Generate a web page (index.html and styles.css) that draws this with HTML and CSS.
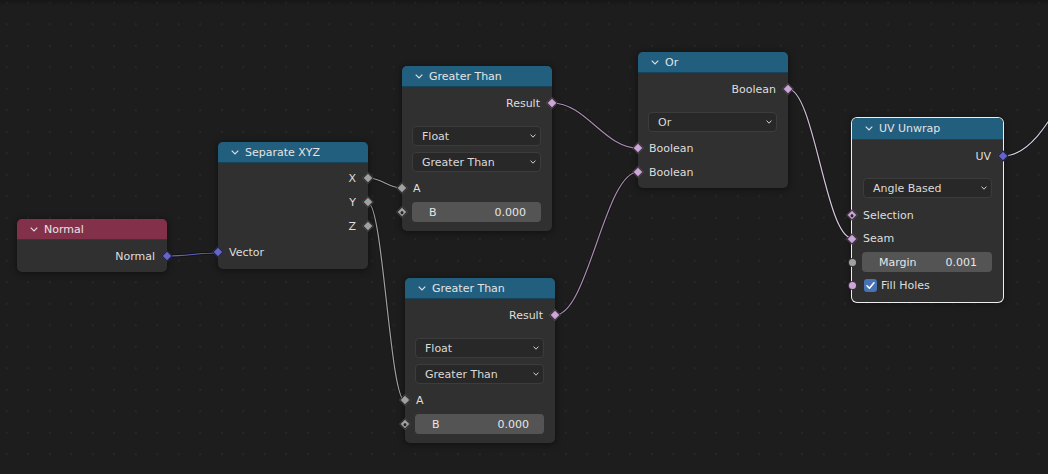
FILE: index.html
```html
<!DOCTYPE html>
<html>
<head>
<meta charset="utf-8">
<link rel="stylesheet" href="styles.css">
</head>
<body>
<div class="canvas">
  <svg class="links" width="1048" height="474" viewBox="0 0 1048 474">
    <defs>
      <linearGradient id="hl6" x1="0" y1="0" x2="1" y2="1">
        <stop offset="0" stop-color="#c8acd0"/>
        <stop offset="1" stop-color="#dcd0e0"/>
      </linearGradient>
      <linearGradient id="hl7" x1="0" y1="1" x2="1" y2="0">
        <stop offset="0" stop-color="#dcdce8"/>
        <stop offset="1" stop-color="#9898d0"/>
      </linearGradient>
    </defs>
    <g class="shadow">
      <path d="M167 256 C187 256 198 253 218 253"/>
      <path d="M368 178 C382 178 388 188 402 188"/>
      <path d="M368 203 C383 203 390 401 405 401"/>
      <path d="M552 103 C586 103 604 148 638 148"/>
      <path d="M555 315 C588 315 605 172 638 172"/>
      <path d="M788 89 C814 89 826 238 852 238"/>
      <path d="M1003 156 C1054 156 1079 30 1130 30"/>
    </g>
    <path class="ln ln-vec" d="M167 256 C187 256 198 253 218 253"/>
    <path class="ln ln-flt" d="M368 178 C382 178 388 188 402 188"/>
    <path class="ln ln-flt" d="M368 203 C383 203 390 401 405 401"/>
    <path class="ln ln-bool" d="M552 103 C586 103 604 148 638 148"/>
    <path class="ln ln-bool" d="M555 315 C588 315 605 172 638 172"/>
    <path class="ln ln-hl6" d="M788 89 C814 89 826 238 852 238"/>
    <path class="ln ln-hl7" d="M1003 156 C1054 156 1079 30 1130 30"/>
  </svg>

  <!-- Normal -->
  <div class="node pos-normal">
    <div class="hdr hdr-input">
      <svg class="chev" width="8" height="5" viewBox="0 0 8 5"><polyline points="0.7,0.7 4,4 7.3,0.7"/></svg>
      <span class="title">Normal</span>
    </div>
    <div class="body pad-n">
      <div class="row out"><span>Normal</span><i class="sock vec"></i></div>
    </div>
  </div>

  <!-- Separate XYZ -->
  <div class="node pos-sep">
    <div class="hdr hdr-conv">
      <svg class="chev" width="8" height="5" viewBox="0 0 8 5"><polyline points="0.7,0.7 4,4 7.3,0.7"/></svg>
      <span class="title">Separate XYZ</span>
    </div>
    <div class="body pad-sep">
      <div class="row out"><span>X</span><i class="sock flt"></i></div>
      <div class="row out"><span>Y</span><i class="sock flt"></i></div>
      <div class="row out"><span>Z</span><i class="sock flt"></i></div>
      <div class="row in mt2"><i class="sock vec"></i><span>Vector</span></div>
    </div>
  </div>

  <!-- Greater Than (top) -->
  <div class="node pos-gt1">
    <div class="hdr hdr-conv">
      <svg class="chev" width="8" height="5" viewBox="0 0 8 5"><polyline points="0.7,0.7 4,4 7.3,0.7"/></svg>
      <span class="title">Greater Than</span>
    </div>
    <div class="body pad-gt">
      <div class="row out"><span>Result</span><i class="sock bool"></i></div>
      <div class="drop mt11"><span>Float</span><svg class="dchev" width="6" height="4" viewBox="0 0 6 4"><polyline points="0.6,0.6 3,3.2 5.4,0.6"/></svg></div>
      <div class="drop mt6"><span>Greater Than</span><svg class="dchev" width="6" height="4" viewBox="0 0 6 4"><polyline points="0.6,0.6 3,3.2 5.4,0.6"/></svg></div>
      <div class="row in mt4"><i class="sock flt"></i><span>A</span></div>
      <div class="row in"><i class="sock flt dot"></i><div class="field"><span>B</span><span>0.000</span></div></div>
    </div>
  </div>

  <!-- Greater Than (bottom) -->
  <div class="node pos-gt2">
    <div class="hdr hdr-conv">
      <svg class="chev" width="8" height="5" viewBox="0 0 8 5"><polyline points="0.7,0.7 4,4 7.3,0.7"/></svg>
      <span class="title">Greater Than</span>
    </div>
    <div class="body pad-gt">
      <div class="row out"><span>Result</span><i class="sock bool"></i></div>
      <div class="drop mt11"><span>Float</span><svg class="dchev" width="6" height="4" viewBox="0 0 6 4"><polyline points="0.6,0.6 3,3.2 5.4,0.6"/></svg></div>
      <div class="drop mt6"><span>Greater Than</span><svg class="dchev" width="6" height="4" viewBox="0 0 6 4"><polyline points="0.6,0.6 3,3.2 5.4,0.6"/></svg></div>
      <div class="row in mt4"><i class="sock flt"></i><span>A</span></div>
      <div class="row in"><i class="sock flt dot"></i><div class="field"><span>B</span><span>0.000</span></div></div>
    </div>
  </div>

  <!-- Or -->
  <div class="node pos-or">
    <div class="hdr hdr-conv">
      <svg class="chev" width="8" height="5" viewBox="0 0 8 5"><polyline points="0.7,0.7 4,4 7.3,0.7"/></svg>
      <span class="title">Or</span>
    </div>
    <div class="body pad-or">
      <div class="row out"><span>Boolean</span><i class="sock bool"></i></div>
      <div class="drop mt11"><span>Or</span><svg class="dchev" width="6" height="4" viewBox="0 0 6 4"><polyline points="0.6,0.6 3,3.2 5.4,0.6"/></svg></div>
      <div class="row in mt4"><i class="sock bool"></i><span>Boolean</span></div>
      <div class="row in"><i class="sock bool"></i><span>Boolean</span></div>
    </div>
  </div>

  <!-- UV Unwrap -->
  <div class="node pos-uv selected">
    <div class="hdr hdr-geo">
      <svg class="chev" width="8" height="5" viewBox="0 0 8 5"><polyline points="0.7,0.7 4,4 7.3,0.7"/></svg>
      <span class="title">UV Unwrap</span>
    </div>
    <div class="body pad-uv">
      <div class="row out"><span>UV</span><i class="sock vec"></i></div>
      <div class="drop mt10"><span>Angle Based</span><svg class="dchev" width="6" height="4" viewBox="0 0 6 4"><polyline points="0.6,0.6 3,3.2 5.4,0.6"/></svg></div>
      <div class="row in mt5"><i class="sock bool dot"></i><span>Selection</span></div>
      <div class="row in h23"><i class="sock bool"></i><span>Seam</span></div>
      <div class="row in"><i class="sock circ flt-c"></i><div class="field"><span class="flabel">Margin</span><span>0.001</span></div></div>
      <div class="row in h22"><i class="sock circ bool-c"></i>
        <span class="check"><svg width="13" height="13" viewBox="0 0 13 13"><polyline points="3,6.8 5.4,9.2 10,3.8"/></svg></span>
        <span class="clabel">Fill Holes</span>
      </div>
    </div>
  </div>
</div>
</body>
</html>
```

FILE: styles.css
```css
* { box-sizing: border-box; }
html, body { margin: 0; padding: 0; background: #1d1d1d; }

.canvas {
  position: relative;
  width: 1048px;
  height: 474px;
  overflow: hidden;
  font-family: "DejaVu Sans", "Liberation Sans", sans-serif;
  font-size: 11px;
  color: #dedede;
  background:
    linear-gradient(to bottom, rgba(0,0,0,0.22), rgba(0,0,0,0) 6px),
    radial-gradient(circle, #282828 0.9px, rgba(40,40,40,0) 1.3px) -4px -8px / 21.5px 21.5px,
    #1d1d1d;
}

.links { position: absolute; left: 0; top: 0; }
.links path { fill: none; }
.links .shadow path { stroke: rgba(0,0,0,0.35); stroke-width: 2.8; }
.ln { stroke-width: 1.2; }
.ln-vec { stroke: #6464c0; }
.ln-flt { stroke: #a0a0a0; }
.ln-bool { stroke: #a98bb3; }
.ln-hl6 { stroke: url(#hl6); }
.ln-hl7 { stroke: url(#hl7); }

/* nodes */
.node {
  position: absolute;
  width: 150px;
  background: #303030;
  border-radius: 5px;
  box-shadow: 0 1px 6px 1px rgba(0,0,0,0.38);
}
.node.selected { box-shadow: 0 0 0 1px #eeeeee, 0 1px 6px 1px rgba(0,0,0,0.38); }

.pos-normal { left: 17px; top: 219px; }
.pos-sep    { left: 218px; top: 142px; }
.pos-gt1    { left: 402px; top: 66px; }
.pos-gt2    { left: 405px; top: 278px; }
.pos-or     { left: 638px; top: 52px; }
.pos-uv     { left: 852px; top: 118px; width: 151px; }

.hdr {
  height: 21px;
  display: flex;
  align-items: center;
  border-radius: 5px 5px 0 0;
  color: #e4e4e4;
  border-bottom: 1px solid rgba(0,0,0,0.28);
}
.pos-uv .hdr { height: 22px; }
.hdr-input { background: #83314a; }
.hdr-conv  { background: #225f7f; }
.hdr-geo   { background: #225f7f; }

.chev { margin-left: 13px; flex: none; }
.chev polyline { fill: none; stroke: #e0e0e0; stroke-width: 1.1; }
.title { margin-left: 6px; line-height: 1; }

.body { display: flex; flex-direction: column; }
.pad-n   { padding: 4px 0 4px; }
.pad-sep { padding: 3px 0 5px; }
.pad-gt  { padding: 4px 0 7px; }
.pad-or  { padding: 4px 0 4px; }
.pad-uv  { padding: 4px 0 6px; }

.mt2 { margin-top: 2px; }
.mt4 { margin-top: 4px; }
.mt5 { margin-top: 5px; }
.mt6 { margin-top: 6px; }
.mt10 { margin-top: 10px; }
.mt11 { margin-top: 11px; }

.row {
  position: relative;
  height: 24px;
  display: flex;
  align-items: center;
}
.row.h23 { height: 23px; }
.row.h22 { height: 22px; }
.row.out { justify-content: flex-end; padding-right: 12px; }
.row.in { padding-left: 11px; padding-right: 11px; }

/* sockets */
.sock {
  position: absolute;
  top: 50%;
  width: 8px;
  height: 8px;
  margin-top: -4px;
  transform: rotate(45deg);
  border: 1px solid rgba(0,0,0,0.7);
}
.row.out .sock { right: -4px; }
.row.in .sock { left: -4px; }
.sock.vec { background: #6565c8; }
.sock.flt { background: #a1a1a1; }
.sock.bool { background: #cca6d6; }
.sock.dot::after {
  content: "";
  position: absolute;
  left: 50%;
  top: 50%;
  width: 3px;
  height: 3px;
  margin: -1.5px 0 0 -1.5px;
  border-radius: 50%;
  background: #262626;
}
.sock.circ {
  transform: none;
  width: 9px;
  height: 9px;
  margin-top: -4.5px;
  border-radius: 50%;
}
.row.in .sock.circ { left: -4.5px; }
.flt-c { background: #a1a1a1; }
.bool-c { background: #cca6d6; }

/* dropdown */
.drop {
  height: 20px;
  margin-left: 10px;
  margin-right: 11px;
  background: #282828;
  border: 1px solid #3c3c3c;
  border-radius: 4px;
  display: flex;
  align-items: center;
  justify-content: space-between;
  padding: 0 4px 0 9px;
  color: #dadada;
}
.pos-uv .drop { margin-left: 11px; padding-left: 9px; }
.dchev polyline { fill: none; stroke: #cfcfcf; stroke-width: 1; }

/* value field */
.field {
  flex: 1;
  height: 20px;
  margin-left: -1px;
  background: #545454;
  border-radius: 4px;
  display: flex;
  align-items: center;
  justify-content: space-between;
  padding: 0 15px 0 17px;
  color: #e6e6e6;
}

/* checkbox */
.check {
  width: 13px;
  height: 13px;
  border-radius: 3px;
  background: #4772b3;
  display: flex;
  flex: none;
  margin-left: 1px;
}
.check polyline { fill: none; stroke: #ffffff; stroke-width: 1.6; stroke-linecap: round; stroke-linejoin: round; }
.clabel { margin-left: 4px; }
```
